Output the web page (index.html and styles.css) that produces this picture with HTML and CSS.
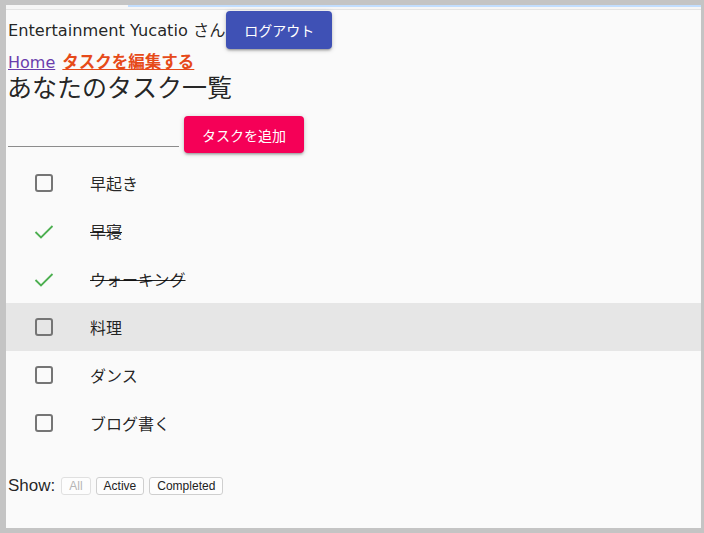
FILE: index.html
```html
<!DOCTYPE html>
<html lang="ja">
<head>
    <meta charset="UTF-8">
    <meta name="viewport" content="width=device-width, initial-scale=1.0">
    <title>タスク一覧</title>
    <link rel="stylesheet" href="styles.css">
</head>
<body>

<div class="screen">
    <!-- browser chrome strip -->
    <div class="topbar"><div class="progress"></div></div>

    <div class="app">
        <!-- user bar -->
        <div class="user-bar">
            <span class="user-name">Entertainment Yucatio さん</span>
            <button class="btn btn-primary">ログアウト</button>
        </div>

        <div class="nav">
            <a href="#" class="link-home">Home</a>
            <a href="#" class="link-edit">タスクを編集する</a>
        </div>

        <h1 class="title">あなたのタスク一覧</h1>

        <!-- add task -->
        <div class="add-row">
            <input type="text" class="task-input">
            <button class="btn btn-accent">タスクを追加</button>
        </div>

        <!-- task list -->
        <ul class="task-list">
            <li class="task">
                <span class="task-icon"><svg viewBox="0 0 24 24" width="24" height="24"><rect x="4" y="4" width="16" height="16" rx="2" class="box"/></svg></span>
                <span class="task-text">早起き</span>
            </li>
            <li class="task done">
                <span class="task-icon"><svg viewBox="0 0 24 24" width="24" height="24"><polyline points="3.5,13 9,18.5 20.5,7" class="check"/></svg></span>
                <span class="task-text">早寝</span>
            </li>
            <li class="task done">
                <span class="task-icon"><svg viewBox="0 0 24 24" width="24" height="24"><polyline points="3.5,13 9,18.5 20.5,7" class="check"/></svg></span>
                <span class="task-text">ウォーキング</span>
            </li>
            <li class="task hover">
                <span class="task-icon"><svg viewBox="0 0 24 24" width="24" height="24"><rect x="4" y="4" width="16" height="16" rx="2" class="box"/></svg></span>
                <span class="task-text">料理</span>
            </li>
            <li class="task">
                <span class="task-icon"><svg viewBox="0 0 24 24" width="24" height="24"><rect x="4" y="4" width="16" height="16" rx="2" class="box"/></svg></span>
                <span class="task-text">ダンス</span>
            </li>
            <li class="task">
                <span class="task-icon"><svg viewBox="0 0 24 24" width="24" height="24"><rect x="4" y="4" width="16" height="16" rx="2" class="box"/></svg></span>
                <span class="task-text">ブログ書く</span>
            </li>
        </ul>

        <!-- filter -->
        <div class="filter">
            <span class="filter-label">Show:</span>
            <button class="filter-btn" disabled>All</button>
            <button class="filter-btn">Active</button>
            <button class="filter-btn">Completed</button>
        </div>
    </div>
</div>

</body>
</html>
```

FILE: styles.css
```css
body {
    margin: 0;
    background-color: #c4c4c4;
    font-family: Roboto, "Noto Sans CJK JP", sans-serif;
}
.screen {
    height: 533px;
    box-sizing: border-box;
    border: solid #c4c4c4;
    border-width: 5px 3px 5px 6px;
    background-color: #fafafa;
    overflow: hidden;
}
.topbar {
    height: 4px;
    background-color: #f6f6f6;
    border-bottom: 1px solid #e4e4e4;
}
.progress {
    margin-left: 122px;
    height: 2px;
    background-color: #c2deff;
}
.app {
    padding: 1px 0 0 2px;
    color: rgba(0, 0, 0, 0.87);
}
.user-bar {
    display: flex;
    align-items: center;
    height: 38px;
}
.user-name {
    font-family: "DejaVu Sans", "Noto Sans CJK JP", sans-serif;
    font-size: 16.2px;
    margin-top: -2px;
}
.btn {
    height: 38px;
    padding: 0 18px;
    border: none;
    border-radius: 4px;
    color: #fff;
    font-family: Roboto, "Noto Sans CJK JP", sans-serif;
    font-size: 14px;
    box-shadow: 0 1px 5px rgba(0, 0, 0, 0.2), 0 2px 2px rgba(0, 0, 0, 0.14), 0 3px 1px -2px rgba(0, 0, 0, 0.12);
}
.btn-primary {
    background-color: #3f51b5;
    margin-left: 1px;
}
.btn-accent {
    background-color: #f50057;
    height: 37px;
}
.nav {
    margin-top: 3px;
    font-family: "DejaVu Sans", "Noto Sans CJK JP", sans-serif;
    font-size: 16px;
    line-height: 22px;
}
.link-home {
    color: #6a3dac;
}
.link-edit {
    color: #e64a19;
    font-weight: bold;
    font-size: 16.5px;
    margin-left: 2px;
}
.title {
    margin: 0 0 0 -1px;
    font-size: 25px;
    font-weight: normal;
    line-height: 30px;
}
.add-row {
    display: flex;
    align-items: flex-end;
    margin-top: 12px;
}
.task-input {
    width: 171px;
    height: 28px;
    padding: 0;
    margin-bottom: 6px;
    margin-right: 5px;
    border: none;
    border-bottom: 1px solid #8c8c8c;
    background: transparent;
    font-size: 16px;
    outline: none;
}
.task-list {
    list-style: none;
    margin: 0 0 0 -2px;
    padding: 6px 0 9px;
}
.task {
    display: flex;
    align-items: center;
    height: 48px;
    padding-left: 26px;
}
.task.hover {
    background-color: #e6e6e6;
}
.task-icon {
    width: 24px;
    height: 24px;
}
.task-icon svg {
    display: block;
}
.box {
    fill: none;
    stroke: #757575;
    stroke-width: 2;
}
.check {
    fill: none;
    stroke: #4caf50;
    stroke-width: 1.8;
}
.task-text {
    margin-left: 34px;
    font-size: 16px;
}
.task.done .task-text {
    text-decoration: line-through;
}
.filter {
    display: flex;
    align-items: center;
    margin-top: 20px;
    font-family: "Liberation Sans", Arial, sans-serif;
}
.filter-label {
    font-size: 17px;
    margin-right: 6px;
}
.filter-btn {
    height: 18px;
    padding: 0 7px;
    margin-right: 5px;
    background-color: #fdfdfd;
    border: 1px solid #cfcfcf;
    border-radius: 3px;
    font-family: "Liberation Sans", Arial, sans-serif;
    font-size: 12px;
    color: #222;
}
.filter-btn:disabled {
    color: #b5b5b5;
    border-color: #e0e0e0;
}
```
